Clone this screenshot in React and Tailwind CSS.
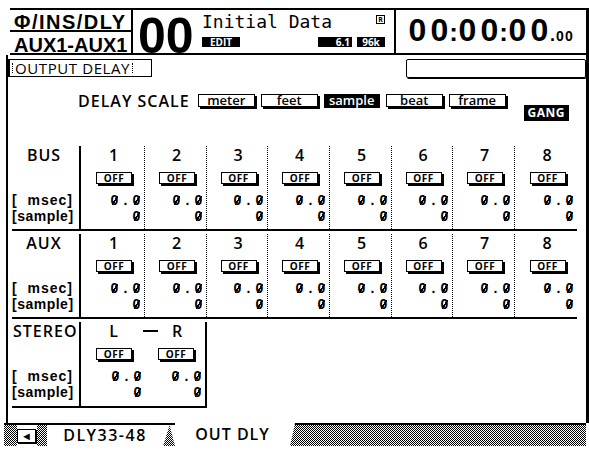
import React from "react";

// LCD page: output delay per bus / aux / stereo
const lcd = "font-['Open_Sans',sans-serif] font-semibold";
const small = "font-['Liberation_Sans',sans-serif] font-bold text-[14px] leading-[16px]";
const dither = "bg-[image:repeating-conic-gradient(#000_0_25%,#fff_0_50%)] bg-[length:2px_2px]";
// the panel font crosses its zeros
const zeroSlash =
  "bg-[image:linear-gradient(to_bottom_right,transparent_42%,#000_42%,#000_58%,transparent_58%)] bg-no-repeat bg-center bg-[length:6px_9px]";

const colWidths = ["w-[64px]", "w-[62px]", "w-[61px]", "w-[62px]", "w-[62px]", "w-[61px]", "w-[62px]", "w-[62px]"];

// one fixed cell per character, like the panel's character grid
function Cells({ text }) {
  return (
    <span className={`flex justify-end ${small}`}>
      {text.split("").map((c, i) => (
        <span key={i} className={`w-[11px] text-center ${c === "0" ? zeroSlash : ""}`}>{c}</span>
      ))}
    </span>
  );
}

function OffButton() {
  return (
    <div className="w-[36px] h-[12px] border border-black bg-white shadow-[2px_2px_0_#000] flex items-center justify-center text-[10px] font-bold leading-none tracking-[0.5px]">
      OFF
    </div>
  );
}

function ScaleButton({ label, active }) {
  if (active) {
    return (
      <div className="w-[56px] h-[14px] bg-black text-white flex items-center justify-center text-[13px] leading-none pb-[1px]">
        {label}
      </div>
    );
  }
  return (
    <div className="w-[57px] h-[13px] border border-black bg-white shadow-[2px_2px_0_#000] flex items-center justify-center text-[13px] leading-none pb-[1px]">
      {label}
    </div>
  );
}

function LabelColumn({ label, left }) {
  return (
    <div className="w-[69px] flex flex-col border-r-2 border-black">
      <div className={`h-[26px] text-[16px] leading-[18px] tracking-[1px] ${left ? "pl-[1px]" : "text-center pr-[3px]"}`}>{label}</div>
      <div className="h-[20px]" />
      <div className={`h-[16px] whitespace-pre tracking-[1px] ${small}`}>{"[  msec]"}</div>
      <div className={`h-[16px] tracking-[0.5px] ${small}`}>[sample]</div>
    </div>
  );
}

function Channel({ head, width, dotted }) {
  return (
    <div className={`${width} flex flex-col ${dotted ? "border-r border-dotted border-black" : ""}`}>
      <div className="h-[26px] text-[16px] leading-[18px] text-center pl-[2px]">{head}</div>
      <div className="h-[20px] flex justify-center pl-[3px]">
        <OffButton />
      </div>
      <div className="h-[16px] pr-[2px]"><Cells text="0.0" /></div>
      <div className="h-[16px] pr-[2px]"><Cells text="0" /></div>
    </div>
  );
}

function Section({ label }) {
  return (
    <div className="flex h-[88px] w-[565px] pt-[3px] border-b-2 border-black">
      <LabelColumn label={label} />
      {colWidths.map((w, i) => (
        <Channel key={i} head={i + 1} width={w} dotted={i < 7} />
      ))}
    </div>
  );
}

function StereoSection() {
  return (
    <div className="flex h-[89px] w-[195px] pt-[3px] border-b-2 border-black">
      <LabelColumn label="STEREO" left />
      <div className="w-[126px] flex flex-col border-r-2 border-black">
        <div className="h-[26px] flex items-start text-[16px] leading-[18px]">
          <span className="w-[63px] text-center pl-[2px]">L</span>
          <span className="w-[15px] h-[2px] bg-black mt-[8px] -ml-[1px]" />
          <span className="w-[38px] text-center">R</span>
        </div>
        <div className="h-[20px] flex">
          <div className="w-[64px] flex justify-center pl-[3px]"><OffButton /></div>
          <div className="w-[62px] flex justify-center pl-[3px]"><OffButton /></div>
        </div>
        <div className="h-[16px] flex">
          <div className="w-[64px] pr-[2px]"><Cells text="0.0" /></div>
          <div className="w-[60px] pr-[2px]"><Cells text="0.0" /></div>
        </div>
        <div className="h-[16px] flex">
          <div className="w-[64px] pr-[2px]"><Cells text="0" /></div>
          <div className="w-[60px] pr-[2px]"><Cells text="0" /></div>
        </div>
      </div>
    </div>
  );
}

function Header() {
  const big = "font-['Liberation_Sans',sans-serif] font-bold text-[32px] leading-none";
  const digits = ["0", "0", ":", "0", "0", ":", "0", "0"];
  return (
    <div className="ml-[6px] h-[47px] flex border-t-2 border-b-2 border-r-[3px] border-black">
      <div className="w-[123px] flex flex-col border-r-2 border-black font-['Liberation_Sans',sans-serif] font-bold text-[20px] leading-none tracking-normal">
        <div className="h-[22px] border-b-2 border-black pl-[4px] pt-[2px] tracking-[1.5px]">Φ/INS/DLY</div>
        <div className="pl-[4px] pt-[3px]">AUX1-AUX1</div>
      </div>
      <div className="w-[63px] pl-[5px] pt-[1px] font-['Liberation_Sans',sans-serif] font-bold text-[50px] leading-none tracking-normal">00</div>
      <div className="w-[200px] flex flex-col pl-[6px] pr-[9px] border-r-2 border-black">
        <div className="flex justify-between items-start">
          <span className="font-['DejaVu_Sans_Mono',monospace] font-normal text-[18px] leading-none tracking-normal mt-[3px]">Initial Data</span>
          <span className="mt-[5px] w-[9px] h-[9px] border border-black flex items-center justify-center text-[7px] font-bold leading-none">R</span>
        </div>
        <div className="flex items-center mt-[6px] font-bold text-[10px] leading-none text-white">
          <span className="w-[38px] h-[10px] bg-black flex items-center justify-center">EDIT</span>
          <span className="flex-1" />
          <span className="w-[34px] h-[10px] bg-black flex items-center justify-end pr-[2px]">6.1</span>
          <span className="ml-[5px] w-[28px] h-[10px] bg-black flex items-center justify-center">96k</span>
        </div>
      </div>
      <div className={`flex-1 flex items-baseline pl-[12px] pt-[4px] tracking-normal ${big}`}>
        {digits.map((c, i) =>
          c === ":" ? (
            <span key={i} className="w-[9px] text-center text-[26px]">:</span>
          ) : (
            <span key={i} className={`w-[19px] text-center ${i % 3 === 1 ? "ml-[3px]" : ""}`}>{c}</span>
          )
        )}
        <span className="w-[7px] text-center text-[18px]">.</span>
        <span className="w-[8px] text-center text-[14px]">0</span>
        <span className="w-[8px] ml-[1px] text-center text-[14px]">0</span>
      </div>
    </div>
  );
}

function TabStrip() {
  return (
    <div className="flex h-[23px] w-[582px]">
      <div className={`w-[13px] border-t-2 border-black ${dither}`} />
      <div className="w-[20px] border-t-2 border-black flex items-center">
        <div className="w-[19px] h-[14px] border border-black bg-white shadow-[1px_1px_0_#000] flex items-center justify-center text-[11px] leading-none">◄</div>
      </div>
      <div className={`w-[10px] border-t-2 border-black ${dither}`} />
      <div className="w-[116px] border-t-2 border-black bg-white flex items-center justify-center text-[16px] leading-none tracking-[1.5px] pb-[2px]">DLY33-48</div>
      <div className="w-[12px] border-t-2 border-black relative">
        <div className={`absolute inset-0 [clip-path:polygon(55%_0,100%_100%,0_100%)] ${dither}`} />
      </div>
      <div className="w-[115px] bg-white flex items-center justify-center text-[16px] leading-none tracking-[1px] pb-[2px]">OUT DLY</div>
      <div className={`flex-1 border-t-2 border-black [clip-path:polygon(5px_0,100%_0,100%_100%,0_100%)] ${dither}`} />
    </div>
  );
}

export default function App() {
  return (
    <div className={`w-[589px] h-[451px] bg-white text-black overflow-hidden pt-[8px] pl-[4px] ${lcd}`}>
      <Header />
      <div className="ml-[2px] h-[368px] border-l-2 border-r-[3px] border-black flex flex-col">
        <div className="flex justify-between items-start mt-[4px]">
          <div className="h-[18px] w-[144px] border border-black border-l-2 flex items-center pl-[2px] text-[15px] leading-none font-normal tracking-[0.6px]">
            <span className="border-l border-dotted border-black h-[10px] mr-[2px]" />
            OUTPUT DELAY
            <span className="border-l border-dotted border-black h-[10px] ml-[2px]" />
          </div>
          <div className="h-[19px] w-[180px] border border-black rounded-[2px] shadow-[1px_1px_0_#000]" />
        </div>
        <div className="flex items-start h-[28px] mt-[16px] pl-[70px]">
          <span className="text-[16px] leading-[15px] tracking-[1px] mr-[8px]">DELAY SCALE</span>
          <div className="flex gap-[6px]">
            <ScaleButton label="meter" />
            <ScaleButton label="feet" />
            <ScaleButton label="sample" active />
            <ScaleButton label="beat" />
            <ScaleButton label="frame" />
          </div>
          <span className="ml-[18px] mt-[11px] w-[45px] h-[16px] bg-black text-white flex items-center justify-center text-[12px] font-bold leading-none tracking-[0.5px]">GANG</span>
        </div>
        <div className="ml-[4px] mt-[21px] flex flex-col">
          <Section label="BUS" />
          <Section label="AUX" />
          <StereoSection />
        </div>
      </div>
      <TabStrip />
    </div>
  );
}
